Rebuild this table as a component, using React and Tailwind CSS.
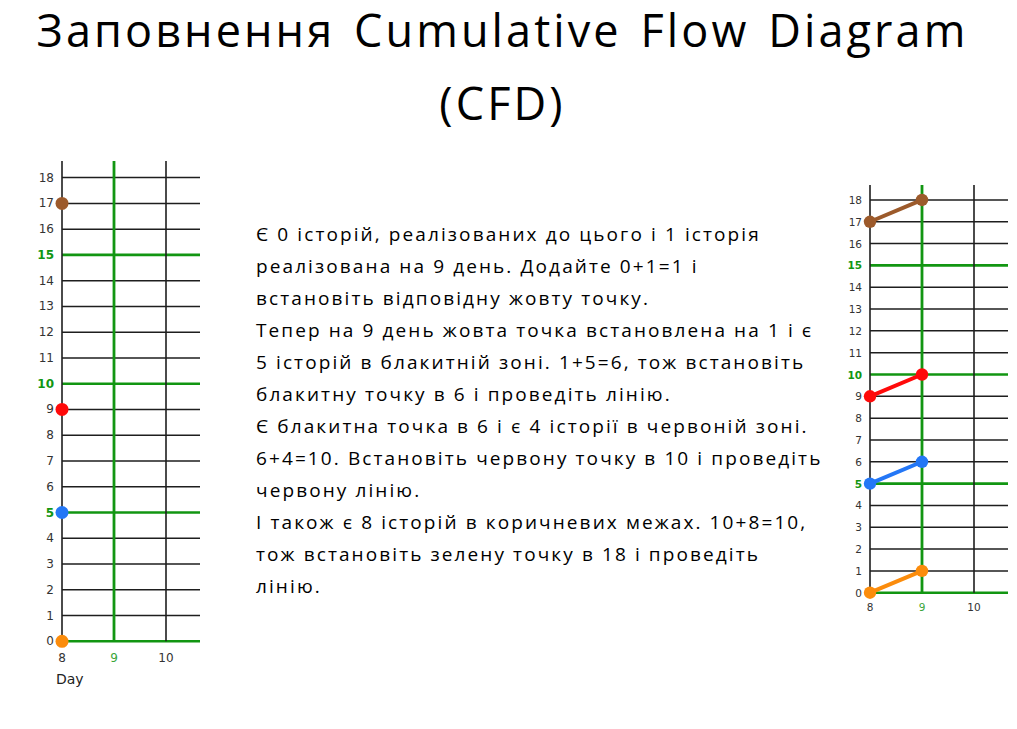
import React from "react";

const GREEN = "#129612";
const BLACK = "#1e1e1e";

function Chart({ vb, w, h, ox, xs, right, top, y0, unit, labelX, fs, bottomY, dots, segs, day, dotR, segW }) {
  const rows = Array.from({ length: 19 }, (_, i) => i);
  const yOf = (v) => y0 - v * unit;
  return (
    <svg width={w} height={h} viewBox={vb} className="block shrink-0">
      {rows.map((v) => {
        const g = v % 5 === 0;
        return (
          <line key={"h" + v} x1={ox} x2={right} y1={yOf(v)} y2={yOf(v)} stroke={g ? GREEN : BLACK} strokeWidth={g ? 2.6 : 1.5} />
        );
      })}
      {xs.map((x, i) => (
        <line key={"v" + i} x1={x} x2={x} y1={top} y2={y0} stroke={i === 1 ? GREEN : BLACK} strokeWidth={i === 1 ? 2.8 : 1.6} />
      ))}
      {rows.map((v) => {
        const g = v > 0 && v % 5 === 0;
        return (
          <text
            key={"l" + v}
            x={labelX}
            y={yOf(v)}
            textAnchor="end"
            dominantBaseline="central"
            fontFamily="'DejaVu Sans', sans-serif"
            fontSize={fs}
            fontWeight={g ? 700 : 400}
            fill={g ? GREEN : "#333"}
          >
            {v}
          </text>
        );
      })}
      {["8", "9", "10"].map((t, i) => (
        <text
          key={"b" + t}
          x={xs[i]}
          y={bottomY}
          textAnchor="middle"
          dominantBaseline="central"
          fontFamily="'DejaVu Sans', sans-serif"
          fontSize={fs}
          fill={i === 1 ? "#3aa53a" : "#333"}
        >
          {t}
        </text>
      ))}
      {day && (
        <text x={day.x} y={day.y} dominantBaseline="central" fontFamily="'DejaVu Sans', sans-serif" fontSize={day.fs} fill="#222">
          Day
        </text>
      )}
      {segs.map((s, i) => (
        <line key={"s" + i} x1={xs[0]} y1={yOf(s.a)} x2={xs[1]} y2={yOf(s.b)} stroke={s.c} strokeWidth={segW} strokeLinecap="round" />
      ))}
      {dots.map((d, i) => (
        <circle key={"d" + i} cx={d.x} cy={yOf(d.v)} r={dotR} fill={d.c} />
      ))}
    </svg>
  );
}

const ORANGE = "#fb8c0c";
const BLUE = "#2477f6";
const RED = "#ff0a0a";
const BROWN = "#9c5a2b";

const lines = [
  "Є 0 історій, реалізованих до цього і 1 історія",
  "реалізована на 9 день. Додайте 0+1=1 і",
  "встановіть відповідну жовту точку.",
  "Тепер на 9 день жовта точка встановлена на 1 і є",
  "5 історій в блакитній зоні. 1+5=6, тож встановіть",
  "блакитну точку в 6 і проведіть лінію.",
  "Є блакитна точка в 6 і є 4 історії в червоній зоні.",
  "6+4=10. Встановіть червону точку в 10 і проведіть",
  "червону лінію.",
  "І також є 8 історій в коричневих межах. 10+8=10,",
  "тож встановіть зелену точку в 18 і проведіть",
  "лінію.",
];

export default function App() {
  return (
    <div className="flex flex-col w-[1017px] h-[729px] bg-white overflow-hidden font-['Open_Sans',sans-serif] text-black">
      <h1 className="flex flex-col h-[150px] pr-[12px] text-center text-[45px] leading-[60px] font-normal tracking-[3.1px] [word-spacing:4px]">
        <span className="block whitespace-nowrap">Заповнення Cumulative Flow Diagram</span>
        <span className="block mt-[13px]">(CFD)</span>
      </h1>
      <div className="flex items-start">
        <div className="ml-[25px]">
          <Chart
            vb="25 150 180 540"
            w={180}
            h={540}
            ox={62}
            xs={[62, 114, 166]}
            right={200}
            top={161}
            y0={641.3}
            unit={25.76}
            labelX={54}
            fs={12}
            bottomY={657.5}
            dotR={6.5}
            segW={4}
            day={{ x: 56, y: 678.5, fs: 14 }}
            segs={[]}
            dots={[
              { x: 62, v: 17, c: BROWN },
              { x: 62, v: 9, c: RED },
              { x: 62, v: 5, c: BLUE },
              { x: 62, v: 0, c: ORANGE },
            ]}
          />
        </div>
        <div className="ml-[51px] mt-[68px] w-[579px] text-[19px] leading-[32px] tracking-[2.1px] whitespace-nowrap">
          {lines.map((l, i) => (
            <div key={i}>{l}</div>
          ))}
        </div>
        <div className="mt-[30px]">
          <Chart
            vb="835 180 182 440"
            w={182}
            h={440}
            ox={870}
            xs={[870, 922, 974]}
            right={1008}
            top={185}
            y0={592.7}
            unit={21.82}
            labelX={862}
            fs={10.5}
            bottomY={606.7}
            dotR={6.2}
            segW={4}
            segs={[
              { a: 0, b: 1, c: ORANGE },
              { a: 5, b: 6, c: BLUE },
              { a: 9, b: 10, c: RED },
              { a: 17, b: 18, c: BROWN },
            ]}
            dots={[
              { x: 870, v: 0, c: ORANGE },
              { x: 922, v: 1, c: ORANGE },
              { x: 870, v: 5, c: BLUE },
              { x: 922, v: 6, c: BLUE },
              { x: 870, v: 9, c: RED },
              { x: 922, v: 10, c: RED },
              { x: 870, v: 17, c: BROWN },
              { x: 922, v: 18, c: BROWN },
            ]}
          />
        </div>
      </div>
    </div>
  );
}
